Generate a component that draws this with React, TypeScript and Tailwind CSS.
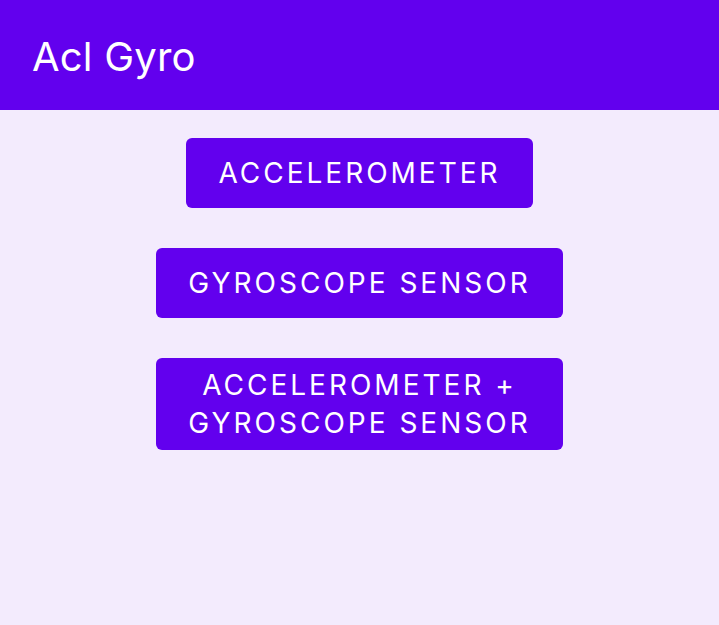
export default function App() {
  return (
    <div className="min-h-[625px] w-full bg-[#f3ebfd] font-['Inter',sans-serif]">
      <header className="flex h-[110px] items-center bg-[#6200ee] px-8">
        <h1 className="pt-[4px] text-[40px] leading-none font-normal tracking-[0.2px] text-white">Acl Gyro</h1>
      </header>
      <main className="flex flex-col items-center gap-10 pt-7">
        <button className="flex min-h-[70px] items-center justify-center rounded-[6px] bg-[#6200ee] px-8 text-[28px] leading-[38px] tracking-[3px] text-white">
          ACCELEROMETER
        </button>
        <button className="flex min-h-[70px] items-center justify-center rounded-[6px] bg-[#6200ee] px-8 text-[28px] leading-[38px] tracking-[3px] text-white">
          GYROSCOPE SENSOR
        </button>
        <button className="flex min-h-[70px] items-center justify-center rounded-[6px] bg-[#6200ee] px-8 py-2 text-center text-[28px] leading-[38px] tracking-[3px] text-white">
          ACCELEROMETER +<br />
          GYROSCOPE SENSOR
        </button>
      </main>
    </div>
  );
}
